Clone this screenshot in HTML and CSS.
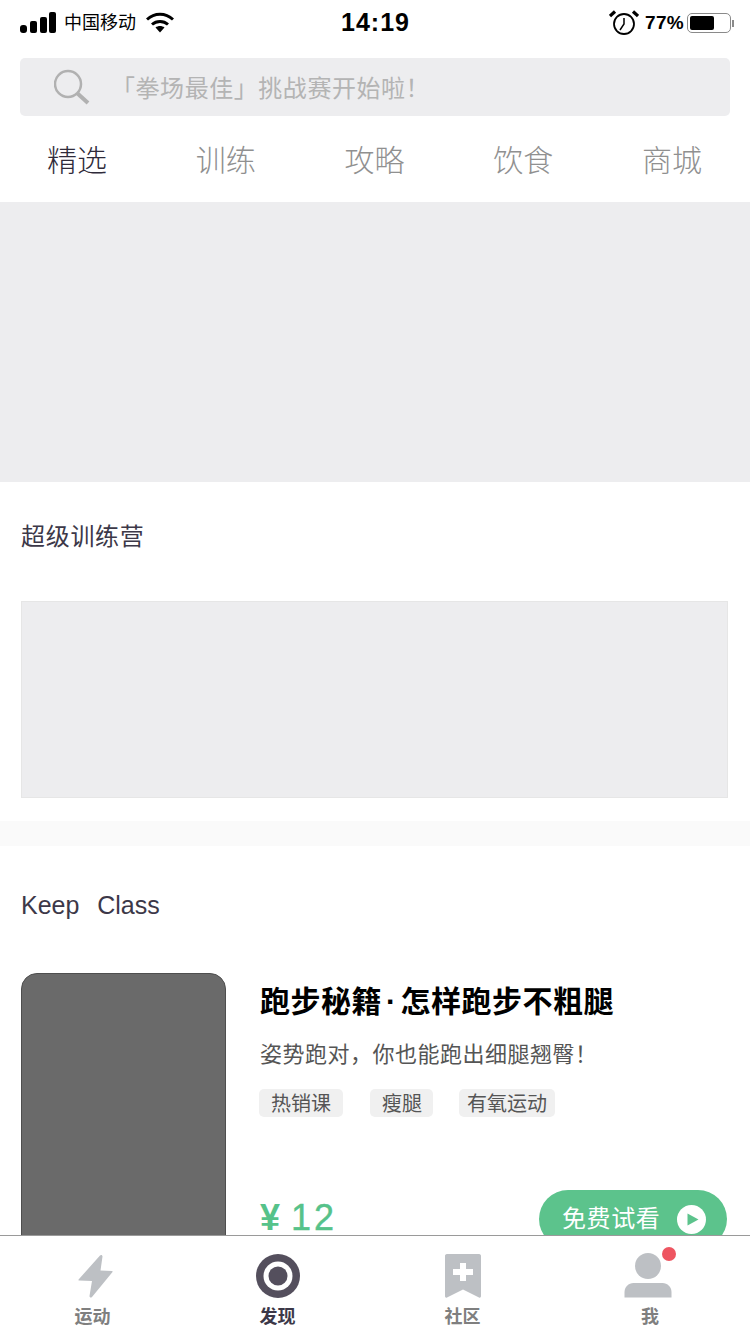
FILE: index.html
```html
<!DOCTYPE html>
<html lang="zh-CN">
<head>
    <meta charset="UTF-8">
    <title>发现</title>
    <link rel="stylesheet" href="styles.css">
</head>
<body>
    <div class="page">
        <div class="status-bar">
            <div class="status-left">
                <svg class="signal" width="36" height="22" viewBox="0 0 36 22">
                    <rect x="0" y="13" width="7" height="8" rx="3" />
                    <rect x="10" y="9" width="7" height="12" rx="2" />
                    <rect x="20" y="5" width="7" height="16" rx="2" />
                    <rect x="29" y="0" width="7" height="21" rx="2" />
                </svg>
                <span class="carrier">中国移动</span>
                <svg class="wifi" width="28" height="22" viewBox="0 0 28 22">
                    <path d="M1 7.500C8.500 .5 19.500 .5 27 7.500" fill="none" stroke="#000" stroke-width="3" />
                    <path d="M6 12.500C10.500 8.500 17.500 8.500 22 12.500" fill="none" stroke="#000" stroke-width="3" />
                    <path d="M9.500 15.500C12 13.500 16 13.500 18.500 15.500L14 20.500Z" />
                </svg>
            </div>
            <div class="status-time">14:19</div>
            <div class="status-right">
                <svg class="alarm" width="30" height="26" viewBox="0 0 30 26">
                    <circle cx="15" cy="14" r="10" fill="none" stroke="#000" stroke-width="1.800" />
                    <path d="M15 8V14L11 20" fill="none" stroke="#000" stroke-width="1.500" />
                    <path d="M1 6L6 1.500" stroke="#000" stroke-width="3.200" />
                    <path d="M29 6L24 1.500" stroke="#000" stroke-width="3.200" />
                </svg>
                <span class="percent">77%</span>
                <div class="battery">
                    <div class="battery-fill"></div>
                </div>
                <div class="battery-tip"></div>
            </div>
        </div>

        <div class="search-wrap">
            <div class="search-box">
                <svg width="36" height="36" viewBox="0 0 36 36">
                    <circle cx="14" cy="15" r="13" fill="none" stroke="#b1b1b1" stroke-width="2.500" />
                    <path d="M23 24L34 34" stroke="#b1b1b1" stroke-width="4" />
                </svg>
                <span class="search-text">「拳场最佳」挑战赛开始啦！</span>
            </div>
        </div>

        <div class="tabs">
            <span class="tab active">精选</span>
            <span class="tab">训练</span>
            <span class="tab">攻略</span>
            <span class="tab">饮食</span>
            <span class="tab">商城</span>
        </div>

        <div class="main">
            <div class="banner"></div>

            <div class="section-camp">
                <h2 class="section-title">超级训练营</h2>
                <div class="camp-card"></div>
            </div>

            <div class="divider"></div>

            <div class="section-class">
                <h2 class="section-title class-title">Keep&nbsp;&nbsp;&nbsp;Class</h2>
                <div class="course">
                    <div class="course-cover"></div>
                    <div class="course-info">
                        <div class="course-name">跑步秘籍<span class="mid-dot">·</span>怎样跑步不粗腿</div>
                        <div class="course-desc">姿势跑对，你也能跑出细腿翘臀！</div>
                        <div class="course-tags">
                            <span class="tag">热销课</span>
                            <span class="tag tag-short">瘦腿</span>
                            <span class="tag tag-long">有氧运动</span>
                        </div>
                        <div class="course-bottom">
                            <div class="price">
                                <span class="price-unit">¥</span>
                                <span class="price-num">12</span>
                            </div>
                            <div class="try-btn">
                                <span class="try-text">免费试看</span>
                                <svg width="29" height="29" viewBox="0 0 29 29">
                                    <circle cx="14.500" cy="14.500" r="14.500" fill="#fff" />
                                    <path d="M10.500 8.500L21.500 14.500L10.500 20.500Z" fill="#5cc38c" />
                                </svg>
                            </div>
                        </div>
                    </div>
                </div>
            </div>
        </div>

        <div class="tabbar">
            <div class="tabbar-item">
                <svg width="44" height="44" viewBox="0 0 44 44">
                    <path d="M29 1.500C30 .5 31.500 1 31.500 2.500L29.500 16.500L41 17C41.500 17 41.800 17.500 41.500 18L21 43C19.800 44 18.500 43.500 18.500 42L21 27L8 26.500C7.500 26.500 7.300 26 7.600 25.500Z" fill="#bdc0c4" />
                </svg>
                <span>运动</span>
            </div>
            <div class="tabbar-item current">
                <svg width="44" height="44" viewBox="0 0 44 44">
                    <circle cx="22" cy="22" r="22" fill="#544f5d" />
                    <circle cx="22" cy="22" r="14.500" fill="#fff" />
                    <circle cx="22" cy="22" r="9.500" fill="#544f5d" />
                </svg>
                <span>发现</span>
            </div>
            <div class="tabbar-item">
                <svg width="44" height="44" viewBox="0 0 44 44">
                    <path d="M6 0H38C39.500 0 40 1 40 2V42C40 43.500 39 44 38 43.500L22 35.500L6 43.500C5 44 4 43.500 4 42V2C4 1 4.500 0 6 0Z" fill="#bdc0c4" />
                    <path d="M19 9H25V15H32V21H25V27H19V21H12V15H19Z" fill="#fff" />
                </svg>
                <span>社区</span>
            </div>
            <div class="tabbar-item">
                <svg width="50" height="44" viewBox="0 0 50 44">
                    <circle cx="25" cy="12" r="13" fill="#bdc0c4" />
                    <path d="M1.500 43.500V38C1.500 33 5.500 29 10.500 29H39.500C44.500 29 48.500 33 48.500 38V43.500Z" fill="#bdc0c4" />
                </svg>
                <span class="dot"></span>
                <span class="me-label">我</span>
            </div>
        </div>
    </div>
</body>
</html>
```

FILE: styles.css
```css
* {
    box-sizing: border-box;
}
body {
    margin: 0;
    font-family: "Liberation Sans", "Noto Sans CJK SC", sans-serif;
    background-color: #fff;
}
.page {
    width: 750px;
    height: 1334px;
    display: flex;
    flex-direction: column;
    overflow: hidden;
}
.status-bar {
    height: 46px;
    padding: 0 20px;
    flex: none;
    display: flex;
    align-items: center;
    justify-content: space-between;
}
.status-left, .status-right {
    width: 200px;
    display: flex;
    align-items: center;
}
.status-right {
    justify-content: flex-end;
}
.signal {
    margin-right: 9px;
}
.carrier {
    font-size: 18px;
    line-height: 22px;
    margin: 0 10px 0 -1px;
}
.status-time {
    font-size: 25px;
    line-height: 28px;
    font-weight: bold;
    letter-spacing: 1px;
    margin: -2px 0 0 1px;
}
.percent {
    font-size: 19px;
    font-weight: bold;
    letter-spacing: .3px;
    margin: 0 3px 0 6px;
}
.battery {
    width: 44px;
    height: 20px;
    padding: 2px;
    border: 1.500px solid #8a8a8a;
    border-radius: 5px;
}
.battery-fill {
    width: 62%;
    height: 100%;
    background-color: #000;
    border-radius: 2px;
}
.battery-tip {
    width: 2px;
    height: 7px;
    margin-left: 1px;
    margin-right: -4px;
    background-color: #8a8a8a;
}
.search-wrap {
    flex: none;
    padding: 12px 20px 0;
}
.search-box {
    height: 58px;
    padding-left: 34px;
    display: flex;
    align-items: center;
    background-color: #ededef;
    border-radius: 5px;
}
.search-text {
    margin: -2px 0 0 21px;
    font-size: 24px;
    letter-spacing: .55px;
    color: #b4b4b4;
}
.tabs {
    height: 86px;
    flex: none;
    display: flex;
    justify-content: space-between;
    align-items: center;
    padding: 0 48px 2px 47px;
}
.tab {
    font-size: 30px;
    font-weight: 300;
    color: #909090;
}
.tab.active {
    color: #2f2b3a;
}
.main {
    flex: 1;
    min-height: 0;
}
.banner {
    height: 280px;
    background-color: #ededef;
}
.section-camp {
    padding: 0 22px 23px 21px;
}
.section-title {
    margin: 0;
    font-weight: normal;
    font-size: 24px;
    color: #3c3848;
}
.section-camp .section-title {
    padding: 38px 0 47px;
    line-height: 34px;
    letter-spacing: .7px;
}
.camp-card {
    height: 197px;
    background-color: #ededef;
    border: 1px solid #e6e6e6;
}
.divider {
    height: 25px;
    background-color: #fafafa;
}
.section-class {
    padding: 0 23px 0 21px;
}
.class-title {
    padding: 43px 0 52px;
    line-height: 32px;
    font-size: 25px;
    word-spacing: -1px;
}
.course {
    display: flex;
    gap: 34px;
}
.course-cover {
    width: 205px;
    height: 300px;
    flex: none;
    background-color: #6a6a6a;
    border: 1px solid #4e4e4e;
    border-radius: 16px;
}
.course-info {
    flex: 1;
}
.course-name {
    font-size: 30px;
    font-weight: bold;
    line-height: 40px;
    letter-spacing: .5px;
    margin-top: 9px;
    color: #000;
}
.mid-dot {
    padding: 0 4px;
}
.course-desc {
    font-size: 22px;
    line-height: 32px;
    letter-spacing: .5px;
    margin-top: 17px;
    color: #555;
}
.course-tags {
    display: flex;
    gap: 27px;
    margin: 18px 0 0 -1px;
}
.tag {
    height: 28px;
    line-height: 30px;
    padding: 0 12px;
    font-size: 20px;
    color: #555;
    background-color: #f0f0f0;
    border-radius: 5px;
}
.tag-short {
    padding-right: 11px;
}
.tag-long {
    margin-left: -1px;
    padding: 0 8px;
}
.course-bottom {
    display: flex;
    justify-content: space-between;
    align-items: flex-start;
    margin-top: 73px;
}
.price {
    display: flex;
    gap: 11px;
    margin-top: 12px;
    font-size: 36px;
    line-height: 32px;
    color: #56c28a;
}
.price-unit {
    font-weight: bold;
}
.price-num {
    letter-spacing: 3px;
    -webkit-text-stroke: .4px #56c28a;
}
.try-btn {
    width: 188px;
    height: 58px;
    padding: 0 21px 0 23px;
    display: flex;
    align-items: center;
    justify-content: space-between;
    font-size: 24px;
    letter-spacing: .6px;
    color: #fff;
    background-color: #5cc38c;
    border-radius: 29px;
}
.try-text {
    margin-top: -6px;
}
.tabbar {
    position: relative;
    z-index: 1;
    height: 99px;
    flex: none;
    display: flex;
    padding: 18px 0 0;
    border-top: 1px solid #9a9a9a;
    background-color: #fff;
}
.tabbar-item {
    position: relative;
    width: 185px;
    flex: none;
    display: flex;
    flex-direction: column;
    align-items: center;
    font-size: 18px;
    font-weight: bold;
    color: #7f7f7f;
}
.tabbar-item svg {
    overflow: visible;
}
.tabbar-item span {
    line-height: 26px;
    margin-top: 6px;
}
.tabbar-item .me-label {
    margin-left: 5px;
}
.tabbar-item.current {
    color: #3c3848;
}
.tabbar-item .dot {
    position: absolute;
    top: -7px;
    left: 107px;
    width: 14px;
    height: 14px;
    margin: 0;
    background-color: #ee5561;
    border-radius: 50%;
}
```
